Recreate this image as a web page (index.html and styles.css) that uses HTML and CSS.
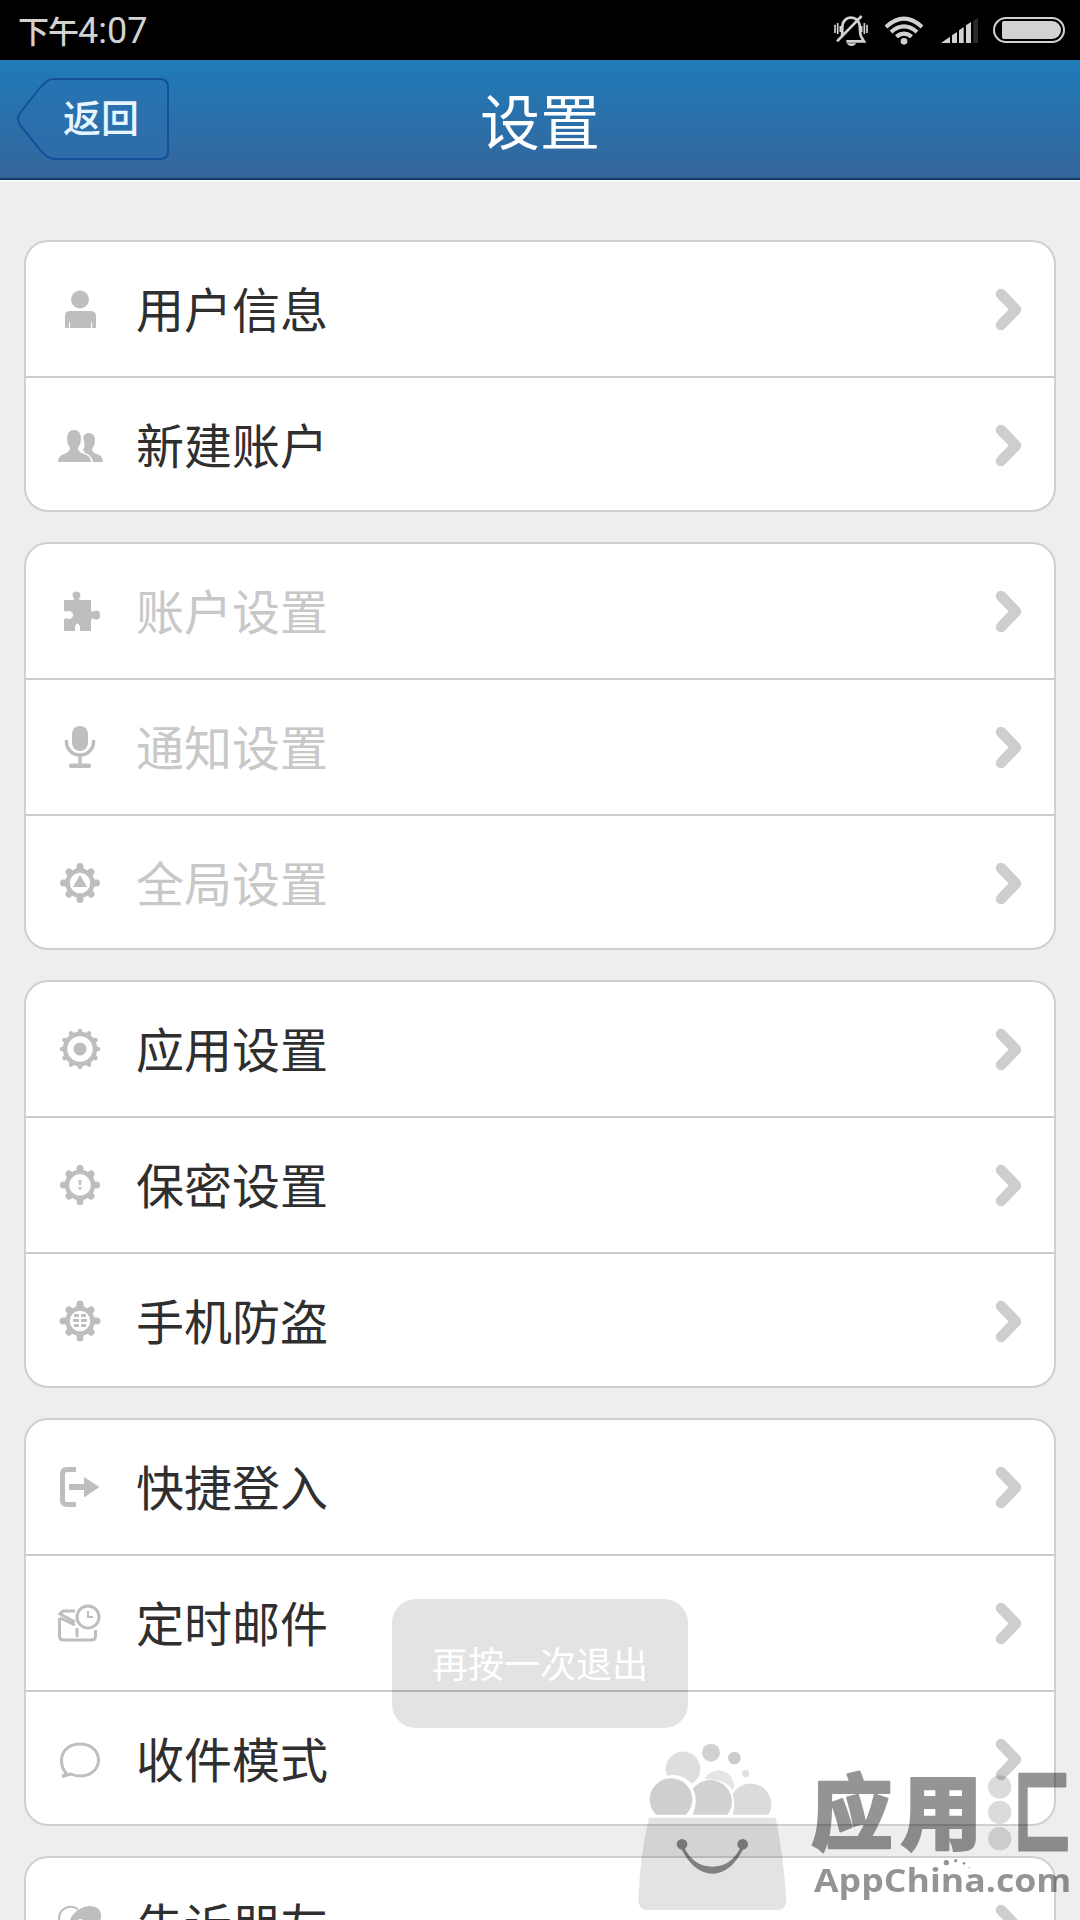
FILE: index.html
```html
<!DOCTYPE html>
<html lang="zh-CN">
  <head>
    <meta charset="UTF-8" />
    <meta name="viewport" content="width=device-width, initial-scale=1.0" />
    <title>设置</title>
    <link rel="stylesheet" href="styles.css">
  </head>

  <body>
    <div class="phone">
      <div class="status">
        <p class="clock">下午<span>4:07</span></p>
        <div class="signs">
          <svg class="bell" viewBox="159 36 108 102">
            <path d="M186 106c2-12-1-24 2-36 4-14 14-20 25-20s20 5 25 18c3 11 0 26 5 38l9 15h-53M171 121l74-76" fill="none" stroke="#d2d2d2" stroke-width="8" />
            <path d="M201 127h27c-3 11-24 11-27 0z" fill="#d2d2d2" />
            <path d="M165 71v25M173 66v33M181 75v18M245 75v18M253 66v33M261 71v25" stroke="#d2d2d2" stroke-width="5" />
          </svg>
          <svg class="wifi" viewBox="312 42 120 93">
            <g fill="none" stroke="#d2d2d2" stroke-width="12">
              <path d="M318 78q54-50 108 0" />
              <path d="M333 93q39-34 78 0" />
              <path d="M349 107q23-18 46 0" />
            </g>
            <circle cx="372" cy="121" r="10" fill="#d2d2d2" />
          </svg>
          <svg class="signal" viewBox="480 48 120 84">
            <path d="M483 129l27-19v19zM516 106l15-10v33h-15zM537 91l14-10v48h-14zM558 76l15-10v63h-15z" fill="#d2d2d2" />
            <path d="M580 62l14-9v76h-14z" fill="#2b2b2b" />
          </svg>
          <i class="battery"></i>
        </div>
      </div>

      <div class="header">
        <a class="back">
          <svg viewBox="0 0 152 84">
            <path d="M36 2H143Q151 2 151 10V75Q151 82 143 82H38Q31 82 24 74L3 48Q-1 42 3 36L22 12Q30 2 36 2Z" />
          </svg>
          <span>返回</span>
        </a>
        <h1>设置</h1>
      </div>

      <div class="content">
        <ul class="card">
          <li>
            <svg class="icon" viewBox="0 0 44 44"><circle cx="22" cy="12.5" r="9" /><path d="M7 41V29q0-5 5-5h20q6 0 6 5v12h-4v-6h-1v6H12v-6h-1v6z" /></svg>
            <span>用户信息</span>
            <svg class="arrow" viewBox="0 0 30 44"><path d="M8 7l15 15.500L8 38" /></svg>
          </li>
          <li>
            <svg class="icon" viewBox="0 0 44 44"><path d="M0 39q0-6 6-8 6-2 6-6-3-4-3-9 0-9 7-9t7 9q0 5-3 9 0 4 6 6 7 2 7 8z" /><path d="M25 14q2-4 6-4 6 0 6 8 0 4-3 8 0 4 5 5 6 2 6 8H35q-1-7-8-9l-2-3q3-4 0-13z" /></svg>
            <span>新建账户</span>
            <svg class="arrow" viewBox="0 0 30 44"><path d="M8 7l15 15.500L8 38" /></svg>
          </li>
        </ul>

        <ul class="card disabled">
          <li>
            <svg class="icon" viewBox="0 0 44 44"><path d="M6 11h9q2-1 0-3-2-5 3-5.500 6 .5 4 5.500-2 2 0 3h11v10q1 3 3 1 6-2 6 4t-6 4q-2-2-3 1v11H22v-5q-3-5-5 0v5H6V31q1-3 4-1 5 0 5-4t-5-4q-3 2-4-1z" /></svg>
            <span>账户设置</span>
            <svg class="arrow" viewBox="0 0 30 44"><path d="M8 7l15 15.500L8 38" /></svg>
          </li>
          <li>
            <svg class="icon" viewBox="0 0 44 44"><rect x="14" y="1" width="16" height="25" rx="8" /><path class="line" d="M8.500 15v2a13.500 13 0 0 0 27 0v-2M22 30v10" /><rect x="11" y="38.500" width="22" height="4.500" rx="2" /></svg>
            <span>通知设置</span>
            <svg class="arrow" viewBox="0 0 30 44"><path d="M8 7l15 15.500L8 38" /></svg>
          </li>
          <li>
            <svg class="icon" viewBox="0 0 44 44"><path class="teeth" d="M22 5.500v33M5.500 22h33M11 11l22 22M11 33l22-22" /><circle class="ring" cx="22" cy="22" r="12.500" /><path d="M22 14l7 12H15z" /></svg>
            <span>全局设置</span>
            <svg class="arrow" viewBox="0 0 30 44"><path d="M8 7l15 15.500L8 38" /></svg>
          </li>
        </ul>

        <ul class="card">
          <li>
            <svg class="icon" viewBox="0 0 44 44"><path class="teeth thin" d="M22 4v36M4 22h36M13 6.400l18 31.200M31 6.400L13 37.600M6.400 13l31.200 18M37.600 13L6.400 31" /><circle class="ring" cx="22" cy="22" r="15" /><circle cx="22" cy="22" r="6.500" /></svg>
            <span>应用设置</span>
            <svg class="arrow" viewBox="0 0 30 44"><path d="M8 7l15 15.500L8 38" /></svg>
          </li>
          <li>
            <svg class="icon" viewBox="0 0 44 44"><path class="teeth" d="M22 5.500v33M5.500 22h33M11 11l22 22M11 33l22-22" /><circle class="ring" cx="22" cy="22" r="13" /><path d="M20.500 17h3l-.5 5h-2zM20.500 24h3v2.500h-3z" /></svg>
            <span>保密设置</span>
            <svg class="arrow" viewBox="0 0 30 44"><path d="M8 7l15 15.500L8 38" /></svg>
          </li>
          <li>
            <svg class="icon" viewBox="0 0 44 44"><path class="teeth" d="M22 5v34M5 22h34M11 11l22 22M11 33l22-22" /><circle class="ring" cx="22" cy="22" r="12.500" /><path d="M16 15h5v3h-5zM23 15h5v3h-5zM15 20h6v3h-6zM23 20h6v3h-6zM16 25h5v3h-5zM23 25h5v3h-5z" /></svg>
            <span>手机防盗</span>
            <svg class="arrow" viewBox="0 0 30 44"><path d="M8 7l15 15.500L8 38" /></svg>
          </li>
        </ul>

        <ul class="card">
          <li>
            <svg class="icon" viewBox="0 0 44 44"><path class="line bold" d="M18 4.500H9Q4.500 4.500 4.500 9v26q0 4.500 4.500 4.500h9" /><path d="M11 19h15v-7l15.500 10L26 32.500V25H11z" /></svg>
            <span>快捷登入</span>
            <svg class="arrow" viewBox="0 0 30 44"><path d="M8 7l15 15.500L8 38" /></svg>
          </li>
          <li>
            <svg class="icon" viewBox="0 0 44 44"><path class="line slim" d="M17 10H5L2 13l15 8M1.500 17v18q0 4 4 4h28q4 0 4-4v-6M2 17l15 7M19 27v9" /><circle class="line slim" cx="30" cy="16" r="11" /><path class="line hair" d="M30 10v6h5" /></svg>
            <span>定时邮件</span>
            <svg class="arrow" viewBox="0 0 30 44"><path d="M8 7l15 15.500L8 38" /></svg>
          </li>
          <li>
            <svg class="icon" viewBox="0 0 44 44"><path class="line slim" d="M8 36Q3.500 31 3.500 23C3.500 14 11 7 22 7s18.500 7 18.500 16S33 39 22 39q-5 0-9-2l-9 2.500q3-1 4-3.500z" /></svg>
            <span>收件模式</span>
            <svg class="arrow" viewBox="0 0 30 44"><path d="M8 7l15 15.500L8 38" /></svg>
          </li>
        </ul>

        <ul class="card">
          <li>
            <svg class="icon" viewBox="0 0 44 44"><path class="line hair" d="M4 24Q-2 14 4 7.500 11 1 20 6" /><path d="M12 16Q19 4 31 3q12 0 12 10 0 9-6 13l-8-5q-5-7-9-4-4 4-8-1z" /></svg>
            <span>告诉朋友</span>
            <svg class="arrow" viewBox="0 0 30 44"><path d="M8 7l15 15.500L8 38" /></svg>
          </li>
        </ul>
      </div>

      <div class="toast">再按一次退出</div>

      <svg class="watermark" viewBox="0 0 1380 600">
        <!-- bubbles -->
        <path d="M215 192a52 52 0 1 0-74-25 72 72 0 0 1 74 25z" fill-opacity=".13" />
        <path d="M254 178a46 46 0 0 1 86 32q-30-36-86-32z" fill-opacity=".1" />
        <circle cx="273" cy="98" r="27" fill-opacity=".18" />
        <circle cx="343" cy="114" r="19" fill-opacity=".2" />
        <circle cx="377" cy="161" r="11" fill-opacity=".12" />
        <path d="M108 284a64 64 0 1 1 90 0z" fill-opacity=".19" />
        <path d="M218 284q18-42 1-78a62 62 0 0 1 104 78z" fill-opacity=".18" />
        <path d="M338 284q9-32 0-62a62 62 0 0 1 108 62z" fill-opacity=".14" />
        <!-- bag -->
        <path d="M87 293H467Q490 400 499 540 499 570 470 570H84Q55 570 55 540 60 400 87 293z" fill-opacity=".11" />
        <g opacity=".43">
          <circle cx="186" cy="373" r="16" />
          <circle cx="368" cy="373" r="16" />
          <path d="M183 385q38 76 94 76t94-76l-10-1q-29 56-84 56t-84-56z" />
        </g>
        <!-- name -->
        <g class="brand" opacity=".42">
          <text x="572" y="368" font-size="246">应</text>
          <text x="841" y="368" font-size="246">用</text>
          <text transform="translate(1182 377) scale(.85 1.35)" font-size="200">匚</text>
        </g>
        <g fill-opacity=".14">
          <circle cx="1139" cy="201" r="35" />
          <circle cx="1139" cy="277" r="35" />
          <circle cx="1139" cy="356" r="35" />
        </g>
        <text class="site" x="582" y="515" textLength="772" lengthAdjust="spacingAndGlyphs" fill-opacity=".42">AppChina.com</text>
        <g fill-opacity=".42">
          <circle cx="979" cy="428" r="8" />
          <circle cx="1007" cy="422" r="5" />
          <circle cx="1032" cy="430" r="4" />
          <circle cx="1047" cy="443" r="2" />
        </g>
      </svg>
    </div>
  </body>
</html>
```
FILE: styles.css
```css
* {
  margin: 0;
  padding: 0;
  box-sizing: border-box;
}

body {
  font-family: "Noto Sans CJK SC", sans-serif;
  background: #eee;
}

.phone {
  position: relative;
  height: 1920px;
  overflow: hidden;
}

.status {
  height: 60px;
  padding: 0 15px 0 18px;
  background: #000;
  display: flex;
  justify-content: space-between;
  align-items: center;
}

.clock {
  color: #d2d2d2;
  font-size: 31px;
  font-weight: 500;
  line-height: 58px;
  letter-spacing: -1px;
}

.clock span {
  font-family: Roboto, sans-serif;
  font-size: 36px;
  font-weight: 400;
  letter-spacing: 0;
}

.signs {
  display: flex;
  align-items: center;
}

.bell {
  width: 36px;
  height: 34px;
  margin-right: 15px;
}

.wifi {
  width: 40px;
  height: 31px;
  margin-right: 16px;
}

.signal {
  width: 40px;
  height: 28px;
  margin-right: 13px;
}

.battery {
  width: 72px;
  height: 26px;
  padding: 2px 2px 2px 7px;
  border: 2px solid #d2d2d2;
  border-radius: 13px;
}

.battery::before {
  content: "";
  display: block;
  height: 18px;
  background: #d2d2d2;
  border-radius: 2px 9px 9px 2px;
}

.header {
  position: relative;
  height: 122px;
  background: linear-gradient(#1e7bb9, #2e6da6 65%, #34659b);
  border-bottom: 2px solid #fafdff;
  box-shadow: inset 0 -2px #123a66;
}

.header h1 {
  color: #fff;
  font-size: 60px;
  font-weight: 400;
  line-height: 117px;
  text-align: center;
}

.back {
  position: absolute;
  left: 17px;
  top: 17px;
  width: 152px;
  height: 84px;
  padding-left: 46px;
  color: #e6f5ff;
  font-size: 38px;
  font-weight: 500;
  line-height: 77px;
}

.back svg {
  position: absolute;
  left: 0;
  top: 0;
  width: 152px;
  height: 84px;
  fill: #2a70b0;
  fill-opacity: 0.5;
  stroke: #14509a;
  stroke-width: 2;
}

.back span {
  position: relative;
}

.content {
  padding: 58px 24px 0;
}

.card {
  list-style: none;
  margin-bottom: 30px;
  background: #fff;
  border: 2px solid #cfcfcf;
  border-radius: 24px;
}

.card li {
  height: 134px;
  padding: 0 31px 0 32px;
  display: flex;
  align-items: center;
  color: #2f2f2f;
  font-size: 48px;
}

.card li + li {
  height: 136px;
  border-top: 2px solid #cbcbcb;
}

.card li + li:last-child {
  height: 134px;
  padding-top: 2px;
}

.card span {
  flex: 1;
  margin: 0 0 5px 34px;
  line-height: 70px;
}

.card.disabled li {
  color: #c8c8c8;
}

.icon {
  width: 44px;
  height: 44px;
  fill: #bebebe;
  overflow: visible;
}

.icon .line {
  fill: none;
  stroke: #bebebe;
  stroke-width: 3.5;
}

.icon .bold {
  stroke-width: 5;
}

.icon .slim {
  stroke-width: 3;
}

.icon .hair {
  stroke-width: 2;
}

.icon .teeth {
  stroke: #bebebe;
  stroke-width: 7;
  stroke-linecap: round;
}

.icon .thin {
  stroke-width: 4.5;
}

.icon .ring {
  fill: #fff;
  stroke: #bebebe;
  stroke-width: 4.5;
}

.arrow {
  width: 30px;
  height: 44px;
  fill: none;
  stroke: #cecece;
  stroke-width: 10.5;
  stroke-linecap: round;
  stroke-linejoin: round;
}

.toast {
  position: absolute;
  left: 392px;
  top: 1599px;
  width: 296px;
  height: 129px;
  border-radius: 24px;
  background: rgba(0, 0, 0, 0.11);
  color: #fff;
  font-size: 36px;
  line-height: 127px;
  text-align: center;
}

.watermark {
  position: absolute;
  left: 620px;
  top: 1720px;
  width: 460px;
  height: 200px;
}

.brand {
  font-weight: 900;
  stroke: #000;
  stroke-width: 6;
  stroke-linejoin: round;
}

.site {
  font-family: "Open Sans", sans-serif;
  font-weight: 700;
  font-size: 98px;
}
```
